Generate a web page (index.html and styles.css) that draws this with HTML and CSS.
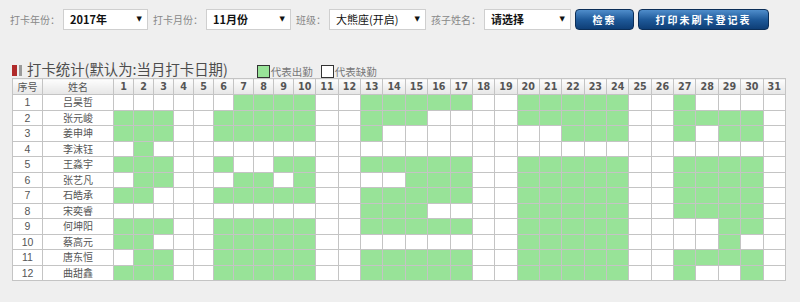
FILE: index.html
```html
<!DOCTYPE html>
<html lang="zh-CN">
<head>
    <meta charset="UTF-8">
    <meta name="viewport" content="width=device-width, initial-scale=1.0">
    <title>打卡统计</title>
    <link rel="stylesheet" href="styles.css">
</head>
<body>
<div class="page">

    <div class="toolbar">
        <label>打卡年份：</label>
        <div class="picker w-year"><span>2017年</span><span class="arrow">▼</span></div>
        <label>打卡月份：</label>
        <div class="picker w-month"><span>11月份</span><span class="arrow">▼</span></div>
        <label>班级：</label>
        <div class="picker w-class"><span>大熊座(开启)</span><span class="arrow">▼</span></div>
        <label>孩子姓名：</label>
        <div class="picker w-child"><span>请选择</span><span class="arrow">▼</span></div>
        <button class="btn btn-search">检索</button>
        <button class="btn btn-print">打印未刷卡登记表</button>
    </div>

    <div class="section-head">
        <span class="mark-red"></span><span class="mark-gray"></span>
        <h3 class="section-title">打卡统计(默认为:当月打卡日期)</h3>
        <span class="legend"><i class="box box-on"></i>代表出勤</span>
        <span class="legend"><i class="box box-off"></i>代表缺勤</span>
    </div>

    <table class="attend" id="attendTable">
        <colgroup id="cols"></colgroup>
        <thead><tr id="headRow"><th>序号</th><th>姓名</th></tr></thead>
        <tbody id="attendBody"></tbody>
    </table>

</div>
<script src="app.js"></script>
</body>
</html>
```

FILE: styles.css
```css
body {
    margin: 0;
    background: #efefef;
    font-family: "Noto Sans CJK SC", "Liberation Sans", sans-serif;
    color: #555;
}

.page {
    padding: 8px 0 0 10px;
}

.toolbar {
    display: flex;
    align-items: center;
    height: 22px;
}

.toolbar label {
    font-size: 10px;
    color: #888;
    padding-right: 3px;
}

.picker {
    box-sizing: border-box;
    height: 21px;
    border: 1px solid #cfcfcf;
    background: #fff;
    display: flex;
    align-items: center;
    justify-content: space-between;
    padding: 0 5px 0 6px;
    font-size: 11px;
    font-weight: bold;
    color: #111;
    margin-right: 5px;
}

.picker .arrow {
    font-size: 7px;
    font-family: "DejaVu Sans", sans-serif;
}

.w-year { width: 85px; }
.w-month { width: 85px; }
.w-class { width: 97px; font-weight: normal; }
.w-child { width: 87px; margin-right: 4px; }

.btn {
    height: 21px;
    box-sizing: border-box;
    border: 1px solid #0b2e58;
    border-radius: 4px;
    background: linear-gradient(#4f8dcb, #1f5a9a 50%, #0e3e76);
    color: #fff;
    font-family: "Noto Sans CJK SC", sans-serif;
    font-size: 10px;
    font-weight: bold;
    letter-spacing: 2px;
    padding: 0;
    margin-right: 4px;
}

.btn-search { width: 59px; }
.btn-print { width: 131px; }

.section-head {
    display: flex;
    align-items: flex-end;
    height: 18px;
    margin: 30px 0 0 2px;
}

.mark-red {
    width: 5px;
    height: 11px;
    background: #b02a2a;
    margin-bottom: 2px;
}

.mark-gray {
    width: 3px;
    height: 11px;
    background: #9a9a9a;
    margin: 0 5px 2px 2px;
}

.section-title {
    margin: 0;
    font-size: 14.4px;
    font-weight: normal;
    color: #4d4d4d;
    line-height: 18px;
    margin-right: 29px;
}

.legend {
    display: flex;
    align-items: flex-end;
    font-size: 10.5px;
    color: #777;
    line-height: 13px;
    margin-right: 8px;
}

.box {
    display: inline-block;
    width: 11px;
    height: 11px;
    border: 1px solid #333;
    margin-right: 1px;
}

.box-on { background: #98e398; }
.box-off { background: #fff; }

.attend {
    margin: 0 0 0 2px;
    width: 774px;
    table-layout: fixed;
    border-collapse: collapse;
    background: #fff;
    font-size: 10px;
}

.attend th,
.attend td {
    border: 1px solid #c4c4c4;
    padding: 0;
    text-align: center;
    overflow: hidden;
    white-space: nowrap;
}

.attend th {
    height: 15px;
    line-height: 14px;
    background: linear-gradient(#fdfdfd, #e6e6e6);
    font-weight: normal;
    color: #555;
}

.attend th.day {
    font-family: "DejaVu Sans", sans-serif;
    font-weight: bold;
    font-size: 9.6px;
    color: #555;
}

.attend td {
    height: 14.5px;
    line-height: 14px;
    color: #555;
}

.attend td.num {
    font-family: "Liberation Sans", sans-serif;
    font-size: 10.5px;
}

.attend td.on {
    background: #98e398;
}
```

FILE: app.js
```js
var students = [
    ['吕昊哲', '0000001111001111100111110010000'],
    ['张元峻', '1110011111001110000111110011110'],
    ['姜申坤', '1110011111001000000001110010110'],
    ['李沫钰', '0100000000000000000000000000000'],
    ['王淼宇', '1110010011001111100111110011110'],
    ['张艺凡', '0110001101000011100111110011110'],
    ['石皓承', '1100011111001111100111110011110'],
    ['宋奕睿', '0000000000001110000111110011110'],
    ['何坤阳', '1110011111001111100111110000110'],
    ['蔡高元', '1100011111000000000111110000100'],
    ['唐东恒', '0110011111001111100111110011110'],
    ['曲甜鑫', '1110011111001111100111110010010']
];

var cols = document.getElementById('cols');
var headRow = document.getElementById('headRow');
var body = document.getElementById('attendBody');

// first two columns + 1..9 are narrow, the rest share what is left
var widths = [30, 71];
for (var i = 0; i < 9; i++) widths.push(20);
for (var c = 0; c < 33; c++) {
    var col = document.createElement('col');
    if (widths[c]) col.style.width = widths[c] + 'px';
    cols.appendChild(col);
}

for (var d = 1; d <= 31; d++) {
    var th = document.createElement('th');
    th.className = 'day';
    th.textContent = d;
    headRow.appendChild(th);
}

students.forEach(function (s, idx) {
    var tr = document.createElement('tr');
    var html = '<td class="num">' + (idx + 1) + '</td><td>' + s[0] + '</td>';
    for (var k = 0; k < 31; k++) {
        html += s[1].charAt(k) === '1' ? '<td class="on"></td>' : '<td></td>';
    }
    tr.innerHTML = html;
    body.appendChild(tr);
});
```
